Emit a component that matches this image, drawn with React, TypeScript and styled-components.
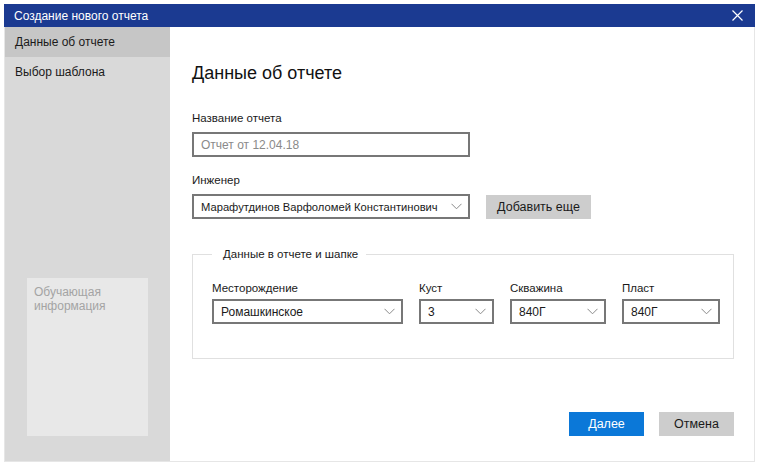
import React from "react";
import styled, { createGlobalStyle } from "styled-components";

const Global = createGlobalStyle`
  html, body { margin: 0; padding: 0; background: #fff; }
  body { font-family: "Liberation Sans", Arial, sans-serif; color: #1a1a1a; }
  * { box-sizing: border-box; }
`;

const Page = styled.div`
  width: 760px;
  height: 467px;
  padding: 4px 5px 5px 4px;
`;

const Window = styled.div`
  width: 751px;
  height: 458px;
  display: flex;
  flex-direction: column;
  border: 1px solid #e6e6e6;
  border-top: none;
`;

const TitleBar = styled.div`
  height: 23px;
  background: #1b3a91;
  color: #fff;
  display: flex;
  align-items: center;
  justify-content: space-between;
  padding: 0 12px 0 10px;
  font-size: 12px;
  margin: 0 -1px;
`;

const Close = styled.svg`
  width: 11px;
  height: 11px;
`;

const Body = styled.div`
  flex: 1;
  display: flex;
  min-height: 0;
`;

const Sidebar = styled.div`
  width: 165px;
  flex-shrink: 0;
  background: #d9d9d9;
  display: flex;
  flex-direction: column;
`;

const NavItem = styled.div<{ $active?: boolean }>`
  height: 30px;
  display: flex;
  align-items: center;
  padding-left: 10px;
  font-size: 12px;
  color: #1a1a1a;
  background: ${(p) => (p.$active ? "#c6c6c6" : "transparent")};
`;

const HelpBox = styled.div`
  margin: auto 22px 25px 22px;
  height: 158px;
  background: #e8e8e8;
  color: #a4a4a4;
  font-size: 12px;
  line-height: 14px;
  padding: 7px 7px;
`;

const Main = styled.div`
  flex: 1;
  min-width: 0;
  background: #fff;
  padding: 35px 20px 25px 22px;
  display: flex;
  flex-direction: column;
`;

const Heading = styled.h1`
  margin: 0 0 27px 0;
  font-size: 18px;
  font-weight: normal;
  line-height: 22px;
  color: #111;
`;

const Label = styled.div<{ $gap?: number }>`
  font-size: 11.5px;
  color: #1a1a1a;
  line-height: 14px;
  margin-bottom: ${(p) => p.$gap ?? 7}px;
`;

const Field = styled.div`
  margin-bottom: 16px;
`;

const Input = styled.div<{ $width: number }>`
  width: ${(p) => p.$width}px;
  height: 25px;
  border: 2px solid #777;
  display: flex;
  align-items: center;
  padding: 0 7px;
  font-size: 12px;
  color: #8a8a8a;
`;

const Select = styled.div<{ $width: number; $size?: number }>`
  width: ${(p) => p.$width}px;
  height: 25px;
  border: 2px solid #777;
  display: flex;
  align-items: center;
  justify-content: space-between;
  gap: 6px;
  padding: 0 6px 0 7px;
  font-size: ${(p) => p.$size ?? 12}px;
  color: #1a1a1a;
  white-space: nowrap;
`;

const SelectText = styled.span`
  overflow: hidden;
`;

const Chevron = () => (
  <svg width="11" height="7" viewBox="0 0 11 7" style={{ flexShrink: 0 }}>
    <path d="M0.5 0.8 L5.5 5.8 L10.5 0.8" fill="none" stroke="#8a8a8a" strokeWidth="1" />
  </svg>
);

const Row = styled.div`
  display: flex;
  align-items: center;
  gap: 16px;
`;

const GrayButton = styled.div<{ $width: number }>`
  width: ${(p) => p.$width}px;
  height: 24px;
  background: #cdcdcd;
  display: flex;
  align-items: center;
  justify-content: center;
  font-size: 12.5px;
  color: #1a1a1a;
`;

const PrimaryButton = styled(GrayButton)`
  background: #0b78d8;
  color: #fff;
`;

const Fieldset = styled.fieldset`
  margin: 13px 0 0 0;
  padding: 21px 14px 34px 19px;
  border: 1px solid #e0e0e0;
  width: 542px;
  min-width: 0;
`;

const Legend = styled.legend`
  font-size: 11.5px;
  padding: 0 8px 0 11px;
  margin-left: 0;
  color: #1a1a1a;
`;

const Grid = styled.div`
  display: flex;
  gap: 16px;
`;

const Footer = styled.div`
  margin-top: auto;
  display: flex;
  justify-content: flex-end;
  gap: 15px;
`;

export default function App() {
  return (
    <Page>
      <Global />
      <Window>
        <TitleBar>
          <span>Создание нового отчета</span>
          <Close viewBox="0 0 11 11">
            <path d="M0.5 0.5 L10.5 10.5 M10.5 0.5 L0.5 10.5" stroke="#fff" strokeWidth="1.2" />
          </Close>
        </TitleBar>
        <Body>
          <Sidebar>
            <NavItem $active>Данные об отчете</NavItem>
            <NavItem>Выбор шаблона</NavItem>
            <HelpBox>
              Обучающая
              <br />
              информация
            </HelpBox>
          </Sidebar>
          <Main>
            <Heading>Данные об отчете</Heading>
            <Field>
              <Label>Название отчета</Label>
              <Input $width={278}>Отчет от 12.04.18</Input>
            </Field>
            <Field>
              <Label>Инженер</Label>
              <Row>
                <Select $width={278} $size={11.2}>
                  <SelectText>Марафутдинов Варфоломей Константинович</SelectText>
                  <Chevron />
                </Select>
                <GrayButton $width={105}>Добавить еще</GrayButton>
              </Row>
            </Field>
            <Fieldset>
              <Legend>Данные в отчете и шапке</Legend>
              <Grid>
                <div>
                  <Label $gap={4}>Месторождение</Label>
                  <Select $width={191}>
                    <span>Ромашкинское</span>
                    <Chevron />
                  </Select>
                </div>
                <div>
                  <Label $gap={4}>Куст</Label>
                  <Select $width={75}>
                    <span>3</span>
                    <Chevron />
                  </Select>
                </div>
                <div>
                  <Label $gap={4}>Скважина</Label>
                  <Select $width={96}>
                    <span>840Г</span>
                    <Chevron />
                  </Select>
                </div>
                <div>
                  <Label $gap={4}>Пласт</Label>
                  <Select $width={98}>
                    <span>840Г</span>
                    <Chevron />
                  </Select>
                </div>
              </Grid>
            </Fieldset>
            <Footer>
              <PrimaryButton $width={75}>Далее</PrimaryButton>
              <GrayButton $width={75}>Отмена</GrayButton>
            </Footer>
          </Main>
        </Body>
      </Window>
    </Page>
  );
}
